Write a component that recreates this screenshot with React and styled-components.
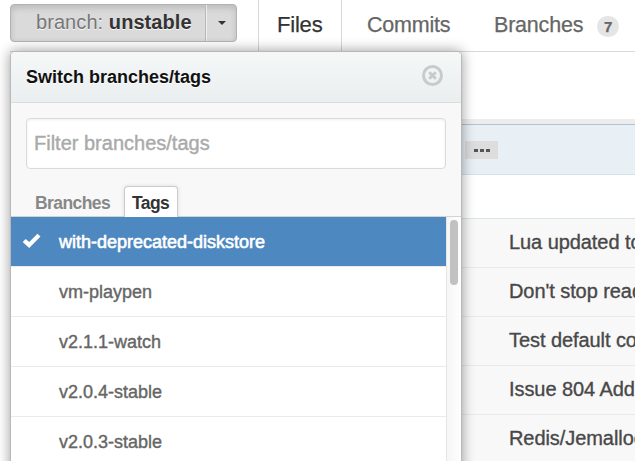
import React from 'react';
import styled, { createGlobalStyle } from 'styled-components';

const GlobalStyle = createGlobalStyle`
  * { box-sizing: border-box; }
  body {
    margin: 0;
    overflow: hidden;
    background: #fff;
    font-family: "Liberation Sans", Arial, sans-serif;
  }
`;

const Page = styled.div`
  position: relative;
  width: 635px;
  height: 461px;
  padding-left: 10px;
  overflow: hidden;
  white-space: nowrap;
`;

const Toolbar = styled.header`
  display: flex;
  height: 52px;
  border-bottom: 1px solid #d8d8d8;
`;

const BranchButton = styled.button`
  display: flex;
  width: 227px;
  height: 38px;
  margin: 4px 21px 0 0;
  padding: 0;
  border: 1px solid #b3b3b3;
  border-radius: 4px;
  background: #dadada;
  box-shadow: inset 0 3px 6px rgba(0, 0, 0, 0.15);
  color: #333;
  font: 20px/35px "Liberation Sans", Arial, sans-serif;
  letter-spacing: 0.07px;
  text-align: left;
  text-shadow: 0 1px 0 rgba(255, 255, 255, 0.8);
`;

const BranchLabel = styled.span`
  width: 195px;
  height: 36px;
  padding-left: 25px;
  border-right: 1px solid #b8b8b8;
  box-shadow: 1px 0 0 #eee;
`;

const Muted = styled.span`
  color: #777;
`;

const Caret = styled.span`
  width: 0;
  height: 0;
  margin: 16px 0 0 12px;
  border: 4px solid transparent;
  border-top-color: #333;
  border-bottom: 0;
`;

const Tab = styled.a`
  display: flex;
  height: 51px;
  padding: ${(p) => (p.$active ? '0 18px' : '0 0 0 25px')};
  width: ${(p) => p.$width}px;
  border: solid #d8d8d8;
  border-width: ${(p) => (p.$active ? '0 1px' : '0')};
  color: ${(p) => (p.$active ? '#333' : '#666')};
  font-size: ${(p) => (p.$active ? 22 : 21.5)}px;
  line-height: ${(p) => (p.$active ? 49 : 51)}px;
  letter-spacing: -0.2px;
  -webkit-text-stroke: 0.25px currentColor;
`;

const Counter = styled.span`
  width: 22px;
  height: 21px;
  margin: 16px 0 0 14px;
  border-radius: 11px;
  background: #e5e5e5;
  color: #666;
  font-size: 15px;
  font-weight: bold;
  line-height: 21px;
  letter-spacing: 0;
  text-align: center;
`;

const Content = styled.main`
  margin-top: 67px;
`;

const CommitBar = styled.div`
  height: 56px;
  padding: 17px 0 0 455px;
  border-top: 5px solid #ededed;
  border-bottom: 1px solid #d5e2e7;
  background: #e8f0f6;
  box-shadow: inset 0 1px 0 #b2c2ce;
`;

const Ellipsis = styled.button`
  display: flex;
  align-items: center;
  justify-content: center;
  gap: 2px;
  width: 33px;
  height: 18px;
  padding: 1px 0 0 1px;
  border: 0;
  background: #ddd;
`;

const Dot = styled.span`
  width: 4px;
  height: 3px;
  background: #555;
`;

const TableHead = styled.div`
  height: 44px;
  border-bottom: 1px solid #d8e6ec;
`;

const CommitRow = styled.div`
  height: 49px;
  padding-left: 499px;
  border-bottom: 1px solid #e9e9e9;
  background: #f8f8f8;
  color: #484848;
  font-size: 20px;
  line-height: 47px;
  letter-spacing: -0.07px;
  -webkit-text-stroke: 0.35px currentColor;
`;

const Menu = styled.section`
  position: absolute;
  left: 10px;
  top: 51px;
  width: 452px;
  height: 430px;
  border: 1px solid #b9b9b9;
  border-radius: 5px 5px 0 0;
  background: #f8f8f8;
  box-shadow: 0 0 13px rgba(0, 0, 0, 0.4);
`;

const MenuHeader = styled.div`
  display: flex;
  justify-content: space-between;
  height: 51px;
  padding: 0 18px 0 15px;
  border-bottom: 1px solid #dcdcdc;
  border-radius: 4px 4px 0 0;
  background: linear-gradient(#f6f8f8, #e9eeee);
  color: #111;
  font-size: 18px;
  font-weight: bold;
  line-height: 50px;
  text-shadow: 0 1px 0 #fff;
`;

const CloseIcon = styled.svg`
  width: 21px;
  height: 21px;
  margin-top: 13px;
  fill: none;
  stroke: #c8cbcb;
`;

const Filter = styled.input`
  display: block;
  width: 420px;
  height: 51px;
  margin: 15px 0 0 15px;
  padding: 0 7px 1px;
  border: 1px solid #dadada;
  border-radius: 4px;
  background: #fff;
  box-shadow: inset 0 1px 3px rgba(0, 0, 0, 0.06);
  font: 20px "Liberation Sans", Arial, sans-serif;
  &::placeholder {
    color: #aaa;
    opacity: 1;
    -webkit-text-stroke: 0.4px #aaa;
  }
`;

const MenuTabs = styled.div`
  display: flex;
  height: 48px;
  padding: 17px 0 0 15px;
  border-bottom: 1px solid #d3d3d3;
`;

const MenuTab = styled.button`
  width: ${(p) => (p.$active ? 54 : 98)}px;
  height: 31px;
  padding: 0 0 0 ${(p) => (p.$active ? 7 : 8)}px;
  border: ${(p) => (p.$active ? '1px solid #ccc' : '1px solid transparent')};
  border-bottom: 0;
  border-radius: 4px 4px 0 0;
  background: ${(p) => (p.$active ? '#fff' : 'transparent')};
  box-shadow: ${(p) => (p.$active ? '0 0 4px rgba(0, 0, 0, 0.12)' : 'none')};
  color: ${(p) => (p.$active ? '#333' : '#888')};
  font: bold 17.5px/33px "Liberation Sans", Arial, sans-serif;
  letter-spacing: -0.58px;
  text-align: left;
`;

const Scroller = styled.div`
  display: flex;
`;

const TagList = styled.div`
  width: 435px;
`;

const TagItem = styled.div`
  display: flex;
  height: 50px;
  border-bottom: 1px solid #eaeaea;
  background: ${(p) => (p.$selected ? '#4d88c0' : '#fff')};
  color: ${(p) => (p.$selected ? '#fff' : '#666')};
  font-size: 18px;
  line-height: 50px;
  -webkit-text-stroke: ${(p) => (p.$selected ? 0.6 : 0.4)}px currentColor;
`;

const CheckSlot = styled.span`
  width: 48px;
  padding-left: 11px;
`;

const CheckIcon = styled.svg`
  display: block;
  width: 19px;
  height: 16px;
  margin-top: 16px;
  fill: #fff;
`;

const Track = styled.div`
  width: 15px;
  height: 260px;
  padding: 3px 0 0 3px;
  border-left: 1px solid #e6e6e6;
  background: linear-gradient(90deg, #f5f5f5, #fff);
`;

const Thumb = styled.div`
  width: 8px;
  height: 65px;
  border-radius: 4px;
  background: #c1c1c1;
`;

const tags = ['with-deprecated-diskstore', 'vm-playpen', 'v2.1.1-watch', 'v2.0.4-stable', 'v2.0.3-stable'];

const commits = ['Lua updated to', "Don't stop read", 'Test default co', 'Issue 804 Add', 'Redis/Jemalloc'];

export default function App() {
  return (
    <Page>
      <GlobalStyle />
      <Toolbar>
        <BranchButton>
          <BranchLabel>
            <Muted>branch:</Muted> <b>unstable</b>
          </BranchLabel>
          <Caret />
        </BranchButton>
        <Tab $active $width={84}>Files</Tab>
        <Tab $width={127}>Commits</Tab>
        <Tab $width={166}>
          Branches
          <Counter>7</Counter>
        </Tab>
      </Toolbar>
      <Content>
        <CommitBar>
          <Ellipsis aria-label="Show full message">
            <Dot />
            <Dot />
            <Dot />
          </Ellipsis>
        </CommitBar>
        <TableHead />
        {commits.map((message) => (
          <CommitRow key={message}>{message}</CommitRow>
        ))}
      </Content>
      <Menu>
        <MenuHeader>
          Switch branches/tags
          <CloseIcon viewBox="0 0 21 21">
            <circle cx="10.5" cy="10.5" r="9" strokeWidth="3" />
            <path d="M7.2 7.2l6.6 6.6M13.8 7.2l-6.6 6.6" strokeWidth="3" />
          </CloseIcon>
        </MenuHeader>
        <Filter placeholder="Filter branches/tags" />
        <MenuTabs>
          <MenuTab>Branches</MenuTab>
          <MenuTab $active>Tags</MenuTab>
        </MenuTabs>
        <Scroller>
          <TagList>
            {tags.map((tag, i) => (
              <TagItem key={tag} $selected={i === 0}>
                <CheckSlot>
                  {i === 0 && (
                    <CheckIcon viewBox="0 0 19 16">
                      <path d="M.7 9L3.7 6l3.5 3L15.5.7l3 2.8L7.2 15z" />
                    </CheckIcon>
                  )}
                </CheckSlot>
                {tag}
              </TagItem>
            ))}
          </TagList>
          <Track>
            <Thumb />
          </Track>
        </Scroller>
      </Menu>
    </Page>
  );
}
